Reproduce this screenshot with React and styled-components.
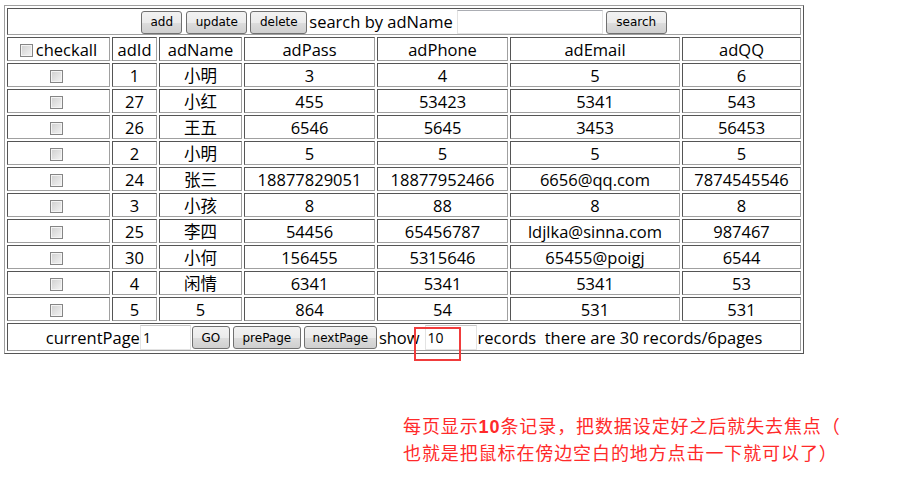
import React from 'react';
import styled, { createGlobalStyle } from 'styled-components';

const GlobalStyle = createGlobalStyle`
    body {
        margin: 0;
        background: #ffffff;
        font-family: "Open Sans", "Noto Sans CJK SC", sans-serif;
        color: #000;
    }
`

const rows = [
    ['1', '小明', '3', '4', '5', '6'],
    ['27', '小红', '455', '53423', '5341', '543'],
    ['26', '王五', '6546', '5645', '3453', '56453'],
    ['2', '小明', '5', '5', '5', '5'],
    ['24', '张三', '18877829051', '18877952466', '6656@qq.com', '7874545546'],
    ['3', '小孩', '8', '88', '8', '8'],
    ['25', '李四', '54456', '65456787', 'ldjlka@sinna.com', '987467'],
    ['30', '小何', '156455', '5315646', '65455@poigj', '6544'],
    ['4', '闲情', '6341', '5341', '5341', '53'],
    ['5', '5', '864', '54', '531', '531'],
]

const colWidths = [103, 45, 83, 131, 131, 170, 119]
const heads = ['adId', 'adName', 'adPass', 'adPhone', 'adEmail', 'adQQ']

function App() {
  return (
    <Page>
        <GlobalStyle />
        <Grid>
            <colgroup>
                {colWidths.map((w, i) => <col key={i} style={{width: w}} />)}
            </colgroup>
            <tbody>
                <tr>
                    <Cell colSpan={7} $h={27}>
                        <Bar>
                            <Btn $w={41}>add</Btn>
                            <Btn $w={61} $ml={4}>update</Btn>
                            <Btn $w={57} $ml={3}>delete</Btn>
                            <Label $ml={2}>search by adName</Label>
                            <SearchInput />
                            <Btn $w={61} $ml={3}>search</Btn>
                        </Bar>
                    </Cell>
                </tr>
                <tr>
                    <Cell $h={24}>
                        <Check type="checkbox" $mr={3} />checkall
                    </Cell>
                    {heads.map(h => <Cell key={h} $h={24}>{h}</Cell>)}
                </tr>
                {rows.map((r, i) => (
                    <tr key={i}>
                        <Cell $h={24}><Check type="checkbox" $mr={5} /></Cell>
                        {r.map((v, j) => <Cell key={j} $h={24}>{v}</Cell>)}
                    </tr>
                ))}
                <tr>
                    <Cell colSpan={7} $h={28}>
                        <Bar>
                            <Label>currentPage</Label>
                            <PageInput $w={51} defaultValue="1" />
                            <Btn $w={38} $ml={1}>GO</Btn>
                            <Btn $w={68} $ml={3}>prePage</Btn>
                            <Btn $w={73} $ml={3}>nextPage</Btn>
                            <Label $ml={2}>show</Label>
                            <Marked>
                                <PageInput $w={52} defaultValue="10" />
                                <RedBox />
                            </Marked>
                            <Label $ml={1}>records&nbsp;&nbsp;there are 30 records/6pages</Label>
                        </Bar>
                    </Cell>
                </tr>
            </tbody>
        </Grid>
        <Note>
            <p>每页显示<b>10</b>条记录，把数据设定好之后就失去焦点（</p>
            <p>也就是把鼠标在傍边空白的地方点击一下就可以了）</p>
        </Note>
    </Page>
  )
}

const Page = styled.div`
    padding: 5px 0 0 4px;
    width: 911px;
    height: 475px;
    position: relative;
`

const Grid = styled.table`
    width: 800px;
    table-layout: fixed;
    border-collapse: separate;
    border-spacing: 2px;
    border: 1px solid;
    border-color: #a0a0a0 #555555 #555555 #a0a0a0;
`

const Cell = styled.td`
    box-sizing: border-box;
    height: ${props => props.$h}px;
    padding: 1px 0 0;
    border: 1px solid;
    border-color: #555555 #a0a0a0 #a0a0a0 #555555;
    text-align: center;
    vertical-align: middle;
    font-size: 16.5px;
    line-height: 20px;
    white-space: nowrap;
`

const Bar = styled.div`
    display: flex;
    justify-content: center;
    align-items: center;
`

const Btn = styled.button`
    width: ${props => props.$w}px;
    height: 23px;
    margin-left: ${props => props.$ml || 0}px;
    padding: 0;
    border: 1px solid #707070;
    border-radius: 3px;
    background: linear-gradient(#f2f2f2 0%, #ebebeb 50%, #dddddd 51%, #cfcfcf 100%);
    font-family: Tahoma, "DejaVu Sans", sans-serif;
    font-size: 12px;
    color: #000;
    cursor: pointer;
`

const Label = styled.span`
    margin-left: ${props => props.$ml || 0}px;
    font-size: 16.5px;
`

const SearchInput = styled.input`
    box-sizing: border-box;
    width: 146px;
    height: 24px;
    margin-left: 4px;
    border: 1px solid #e3e3e3;
    border-top-color: #abadb3;
    outline: none;
`

const PageInput = styled.input`
    box-sizing: border-box;
    width: ${props => props.$w}px;
    height: 25px;
    padding: 0 2px;
    border: 1px solid #e3e3e3;
    border-top-color: #c8c8c8;
    font-family: "Open Sans", sans-serif;
    font-size: 14px;
    outline: none;
`

const Marked = styled.span`
    position: relative;
    display: inline-flex;
    margin-left: 5px;
`

const RedBox = styled.span`
    position: absolute;
    left: -11px;
    top: 2px;
    width: 47px;
    height: 34px;
    box-sizing: border-box;
    border: 2px solid #f03c3c;
`

const Check = styled.input`
    appearance: none;
    width: 13px;
    height: 13px;
    margin: 0 ${props => props.$mr}px 0 0;
    vertical-align: -1px;
    border: 1px solid #858585;
    background: linear-gradient(135deg, #cfcfcf 0%, #f4f4f4 100%);
    box-shadow: inset 0 0 0 1px #f4f4f4;
`

const Note = styled.div`
    margin: 59px 0 0 399px;
    color: #ff2a2a;
    font-family: "Noto Sans CJK SC", sans-serif;
    font-size: 18px;
    letter-spacing: 0.9px;

    p{
        margin: 0;
        line-height: 25px;
    }
    b{
        font-family: "Liberation Sans", sans-serif;
    }
`

export default App;
